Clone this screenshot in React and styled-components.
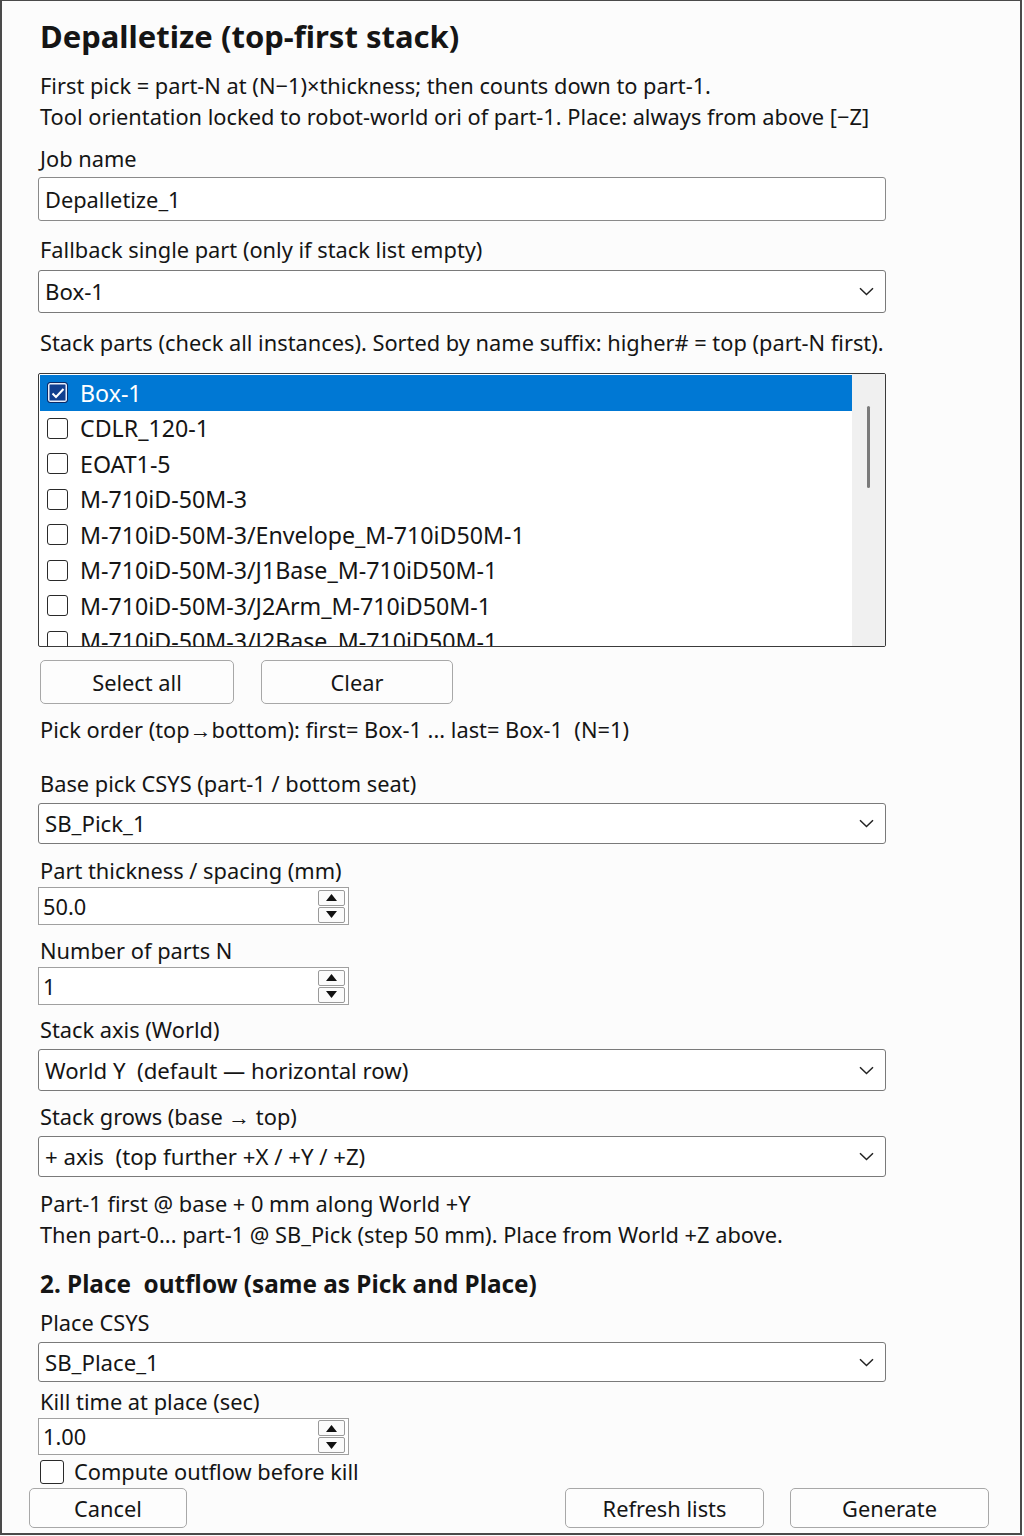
import styled, { createGlobalStyle } from 'styled-components';

const GlobalStyle = createGlobalStyle`
  html, body {
    margin: 0;
    padding: 0;
    background: #fcfcfc;
  }
  * {
    box-sizing: border-box;
  }
`;

const Window = styled.div`
  width: 1022px;
  height: 1535px;
  border: 2px solid #4a4a4a;
  border-top-width: 1px;
  background: #fcfcfc;
  font-family: "Noto Sans", "Open Sans", sans-serif;
  font-size: 21.8px;
  color: #151515;
  display: flex;
  flex-direction: column;
  padding-top: 13px;
`;

const Content = styled.div`
  margin-left: 36px;
  width: 848px;
  display: flex;
  flex-direction: column;
`;

const Title = styled.h1`
  margin: 0;
  padding-left: 2px;
  font-size: 31px;
  font-weight: 700;
  line-height: 44px;
`;

const Heading = styled.h2`
  margin: ${(p) => p.$mt || 0}px 0 0;
  padding-left: 2px;
  font-size: 24.3px;
  font-weight: 700;
  line-height: 36px;
  white-space: pre;
`;

const Text = styled.div`
  margin-top: ${(p) => p.$mt || 0}px;
  padding-left: 2px;
  line-height: 31px;
  white-space: pre;
`;

const TextBox = styled.input`
  margin-top: ${(p) => p.$mt || 0}px;
  width: 100%;
  height: 44px;
  padding: 0 6px;
  border: 1px solid #8a8a8a;
  border-radius: 3px;
  background: #fff;
  font: inherit;
  color: inherit;
  outline: none;
`;

const SelectBox = styled.div`
  margin-top: ${(p) => p.$mt || 0}px;
  height: ${(p) => p.$h || 42}px;
  display: flex;
  align-items: center;
  justify-content: space-between;
  padding: 0 11px 0 6px;
  border: 1px solid #7a7a7a;
  border-radius: 3px;
  background: #fff;
  font-size: 22.2px;
  white-space: pre;
`;

const Spin = styled.div`
  margin-top: ${(p) => p.$mt || 0}px;
  width: 311px;
  height: ${(p) => p.$h || 38}px;
  display: flex;
  align-items: center;
  justify-content: space-between;
  padding: 0 3px 0 4px;
  border: 1.5px solid #a0a0a0;
  background: #fff;
`;

const SpinButtons = styled.div`
  display: flex;
  flex-direction: column;
  gap: 1px;
`;

const SpinButton = styled.div`
  width: 27px;
  height: 16px;
  display: flex;
  align-items: center;
  justify-content: center;
  border: 1px solid #9a9a9a;
  border-radius: 2px;
  background: #fbfbfb;
`;

const ListBox = styled.div`
  margin-top: ${(p) => p.$mt || 0}px;
  height: 274px;
  display: flex;
  border: 1.5px solid #3a3a3a;
  border-radius: 2px;
  background: #fff;
  overflow: hidden;
`;

const Rows = styled.div`
  flex: 1;
  padding: 1px 0 0 1px;
  overflow: hidden;
  font-size: 23.2px;
`;

const Row = styled.div`
  height: 35.5px;
  display: flex;
  align-items: center;
  gap: 12px;
  padding-left: 7px;
  background: ${(p) => (p.$selected ? '#0078d4' : 'transparent')};
  color: ${(p) => (p.$selected ? '#fff' : 'inherit')};
  white-space: nowrap;
`;

const Check = styled.span`
  flex: none;
  width: ${(p) => p.$size || 21}px;
  height: ${(p) => p.$size || 21}px;
  display: flex;
  align-items: center;
  justify-content: center;
  border: 1.5px solid ${(p) => (p.$checked ? '#0b2a66' : '#2a2a2a')};
  border-radius: 3px;
  background: ${(p) => (p.$checked ? '#113f8f' : '#fff')};
  box-shadow: ${(p) => (p.$checked ? 'inset 0 0 0 1.5px #e8eefa' : 'none')};
`;

const ScrollTrack = styled.div`
  width: 33px;
  background: #f0f0f0;
  display: flex;
  justify-content: center;
  padding-top: 32px;
`;

const ScrollThumb = styled.div`
  width: 3px;
  height: 82px;
  border-radius: 2px;
  background: #7a7a7a;
`;

const ButtonRow = styled.div`
  margin-top: ${(p) => p.$mt || 0}px;
  display: flex;
  gap: 27px;
  padding-left: 2px;
`;

const Button = styled.button`
  width: ${(p) => p.$w}px;
  height: ${(p) => p.$h || 44}px;
  border: 1px solid #a8a8a8;
  border-radius: 5px;
  background: #fdfdfd;
  font: inherit;
  color: inherit;
  padding: 0;
`;

const CheckRow = styled.div`
  margin-top: ${(p) => p.$mt || 0}px;
  display: flex;
  align-items: center;
  gap: 10px;
  height: 31px;
  padding-left: 2px;
`;

const Footer = styled.div`
  margin-top: 1px;
  display: flex;
  align-items: center;
  padding: 0 31px 0 27px;
  gap: 26px;
`;

const Spacer = styled.div`
  flex: 1;
`;

function Chevron() {
  return (
    <svg width="15" height="9" viewBox="0 0 15 9">
      <path d="M1 1.2 L7.5 7.5 L14 1.2" fill="none" stroke="#222" strokeWidth="1.5" />
    </svg>
  );
}

function Tick() {
  return (
    <svg width="14" height="12" viewBox="0 0 14 12">
      <path d="M1.5 6.5 L5 10 L12.5 2" fill="none" stroke="#fff" strokeWidth="2" />
    </svg>
  );
}

function Select({ value, mt, h }) {
  return (
    <SelectBox $mt={mt} $h={h}>
      <span>{value}</span>
      <Chevron />
    </SelectBox>
  );
}

function SpinBox({ value, mt, h }) {
  return (
    <Spin $mt={mt} $h={h}>
      <span>{value}</span>
      <SpinButtons>
        <SpinButton>
          <svg width="11" height="7" viewBox="0 0 11 7">
            <path d="M5.5 0 L11 7 L0 7 Z" fill="#111" />
          </svg>
        </SpinButton>
        <SpinButton>
          <svg width="11" height="7" viewBox="0 0 11 7">
            <path d="M0 0 L11 0 L5.5 7 Z" fill="#111" />
          </svg>
        </SpinButton>
      </SpinButtons>
    </Spin>
  );
}

const parts = [
  'Box-1',
  'CDLR_120-1',
  'EOAT1-5',
  'M-710iD-50M-3',
  'M-710iD-50M-3/Envelope_M-710iD50M-1',
  'M-710iD-50M-3/J1Base_M-710iD50M-1',
  'M-710iD-50M-3/J2Arm_M-710iD50M-1',
  'M-710iD-50M-3/J2Base_M-710iD50M-1',
];

export default function App() {
  return (
    <>
      <GlobalStyle />
      <Window>
        <Content>
          <Title>Depalletize (top-first stack)</Title>
          <Text $mt={12}>
            First pick = part-N at (N−1)×thickness; then counts down to part-1.
            {'\n'}Tool orientation locked to robot-world ori of part-1. Place: always from above [−Z]
          </Text>

          <Text $mt={11}>Job name</Text>
          <TextBox $mt={3} readOnly value="Depalletize_1" />

          <Text $mt={13}>Fallback single part (only if stack list empty)</Text>
          <Select mt={5} h={43} value="Box-1" />

          <Text $mt={14}>Stack parts (check all instances). Sorted by name suffix: higher# = top (part-N first).</Text>
          <ListBox $mt={15}>
            <Rows>
              {parts.map((name, i) => (
                <Row key={name} $selected={i === 0}>
                  <Check $checked={i === 0}>{i === 0 && <Tick />}</Check>
                  {name}
                </Row>
              ))}
            </Rows>
            <ScrollTrack>
              <ScrollThumb />
            </ScrollTrack>
          </ListBox>

          <ButtonRow $mt={13}>
            <Button $w={194}>Select all</Button>
            <Button $w={192}>Clear</Button>
          </ButtonRow>

          <Text $mt={10}>{'Pick order (top→bottom): first= Box-1 ... last= Box-1  (N=1)'}</Text>

          <Text $mt={23}>Base pick CSYS (part-1 / bottom seat)</Text>
          <Select mt={4} h={41} value="SB_Pick_1" />

          <Text $mt={11}>Part thickness / spacing (mm)</Text>
          <SpinBox mt={1} value="50.0" />

          <Text $mt={10}>Number of parts N</Text>
          <SpinBox mt={1} value="1" />

          <Text $mt={9}>Stack axis (World)</Text>
          <Select mt={4} h={42} value="World Y  (default — horizontal row)" />

          <Text $mt={10}>Stack grows (base → top)</Text>
          <Select mt={4} h={41} value="+ axis  (top further +X / +Y / +Z)" />

          <Text $mt={11}>
            Part-1 first @ base + 0 mm along World +Y
            {'\n'}Then part-0... part-1 @ SB_Pick (step 50 mm). Place from World +Z above.
          </Text>

          <Heading $mt={16}>{'2. Place  outflow (same as Pick and Place)'}</Heading>

          <Text $mt={5}>Place CSYS</Text>
          <Select mt={4} h={40} value="SB_Place_1" />

          <Text $mt={4}>Kill time at place (sec)</Text>
          <SpinBox mt={1} h={37} value="1.00" />

          <CheckRow $mt={1}>
            <Check $size={24} />
            Compute outflow before kill
          </CheckRow>
        </Content>

        <Footer>
          <Button $w={158} $h={40}>Cancel</Button>
          <Spacer />
          <Button $w={199} $h={40}>Refresh lists</Button>
          <Button $w={199} $h={40}>Generate</Button>
        </Footer>
      </Window>
    </>
  );
}
